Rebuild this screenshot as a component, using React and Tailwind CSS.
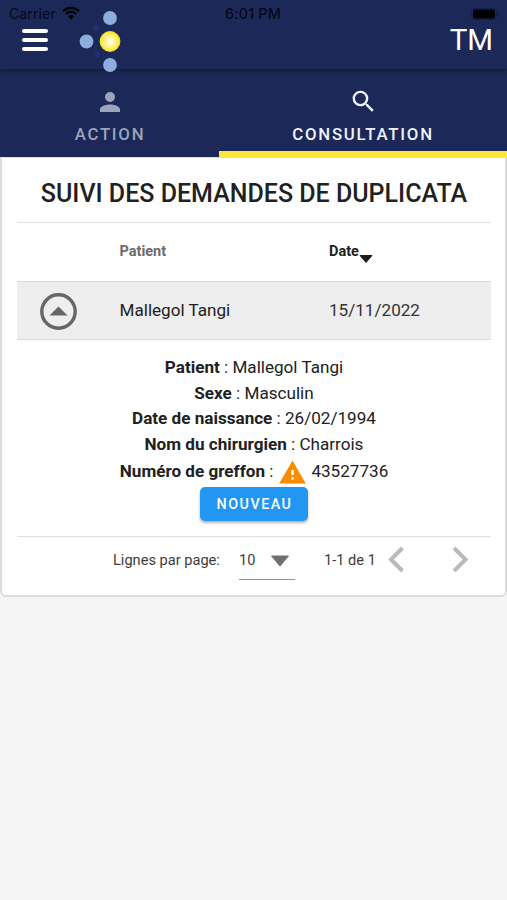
import React, { useState } from 'react';

const PATIENT = {
  name: 'Mallegol Tangi',
  date: '15/11/2022',
  sex: 'Masculin',
  birthDate: '26/02/1994',
  surgeon: 'Charrois',
  graft: '43527736',
};

function Logo() {
  return (
    <svg className="ml-[30px] mt-[9px] h-[66px] w-[46px] shrink-0" viewBox="78 9 46 66">
      <defs>
        <radialGradient id="sun">
          <stop offset="0" stopColor="#fffdf0" />
          <stop offset="0.55" stopColor="#fff28c" />
          <stop offset="0.85" stopColor="#fbea2f" />
          <stop offset="1" stopColor="#e9dc35" />
        </radialGradient>
      </defs>
      <circle cx="110" cy="18" r="6.9" fill="#8cadde" />
      <circle cx="86.5" cy="41.5" r="6.9" fill="#8cadde" />
      <circle cx="110" cy="65" r="6.9" fill="#8cadde" />
      <circle cx="96.3" cy="28" r="3" fill="#262c78" />
      <circle cx="97" cy="55" r="3" fill="#262c78" />
      <circle cx="110" cy="41.5" r="10.4" fill="url(#sun)" />
    </svg>
  );
}

function StatusBar() {
  return (
    <div className="absolute inset-x-0 top-0 z-20 flex h-7 items-center pl-[9px] pr-2 text-[14.2px] text-[#060917]">
      <span className="w-[47px] whitespace-nowrap font-['Inter',sans-serif]">Carrier</span>
      <svg className="ml-[6px] -mt-[2px] h-[14px] w-[18px]" viewBox="0 0 18 14">
        <path d="M1 5.1a11.6 11.6 0 0 1 16 0M3.8 8a7.6 7.6 0 0 1 10.4 0" fill="none" stroke="#000" strokeWidth="2.3" />
        <path d="M9 13.5 5.9 10.3a4.6 4.6 0 0 1 6.2 0z" />
      </svg>
      <span className="ml-[145px] whitespace-nowrap font-['Inter',sans-serif] text-[14.3px] font-medium tracking-[0.2px]">6:01 PM</span>
      <svg className="ml-auto -mt-px h-3 w-[28px]" viewBox="0 0 28 12">
        <rect x="0.5" y="0.5" width="25" height="11" rx="3" fill="none" stroke="#141c45" />
        <rect x="2" y="1.5" width="22" height="9" rx="2" />
        <path d="M26.500 4v4c1-.3 1.500-1 1.500-2s-.5-1.700-1.500-2z" fill="#141c45" />
      </svg>
    </div>
  );
}

function Header() {
  return (
    <header className="relative z-10 flex h-[69px] bg-[#1c2857] shadow-[0_2px_4px_rgba(0,0,0,0.35)]">
      <StatusBar />
      <button className="ml-[22px] mt-[29px] flex h-[22px] w-[26px] flex-col justify-between">
        <span className="h-1 w-full rounded-sm bg-white" />
        <span className="h-1 w-full rounded-sm bg-white" />
        <span className="h-1 w-full rounded-sm bg-white" />
      </button>
      <Logo />
      <span className="ml-auto mr-[14px] mt-[22px] text-[29.500px] leading-[36px] text-white">TM</span>
    </header>
  );
}

function Tabs({ active, onChange }) {
  return (
    <nav className="flex h-[88px] bg-[#1c2857] text-[16.800px] font-medium leading-5">
      <button onClick={() => onChange('action')} className="flex w-[219px] flex-col items-center pt-[18px] text-[#9ba4ba]">
        <svg className="h-[30px] w-[30px]" viewBox="0 0 24 24" fill="currentColor">
          <path d="M12 4a4 4 0 1 1 0 8 4 4 0 0 1 0-8m0 10c4.420 0 8 1.790 8 4v2H4v-2c0-2.210 3.580-4 8-4z" />
        </svg>
        <span className="mt-[7px] pl-px tracking-[1.75px]">ACTION</span>
      </button>
      <button
        onClick={() => onChange('consultation')}
        className={`flex flex-1 flex-col items-center border-b-[6px] pt-[18px] text-[#eef2fc] ${active === 'consultation' ? 'border-[#fce834]' : 'border-transparent'}`}
      >
        <svg className="h-[29px] w-[29px]" viewBox="0 0 24 24" fill="currentColor">
          <path d="M15.5 14h-.79l-.28-.27A6.471 6.471 0 0 0 16 9.500 6.500 6.500 0 1 0 9.500 16c1.610 0 3.090-.59 4.230-1.570l.27.28v.79l5 4.990L20.490 19l-4.990-5zm-6 0C7.010 14 5 11.990 5 9.500S7.010 5 9.500 5 14 7.010 14 9.500 11.990 14 9.500 14z" />
        </svg>
        <span className="mt-[8px] tracking-[1.75px]">CONSULTATION</span>
      </button>
    </nav>
  );
}

function Detail({ label, children }) {
  return (
    <p>
      <b className="font-bold">{label}</b> : {children}
    </p>
  );
}

export default function App() {
  const [tab, setTab] = useState('consultation');
  const [open, setOpen] = useState(true);

  return (
    <div className="h-[900px] w-[507px] overflow-hidden bg-[#f5f5f5] font-['Roboto',sans-serif] text-[#212121]">
      <Header />
      <Tabs active={tab} onChange={setTab} />

      <main className="h-[440px] rounded-b-md border-x-2 border-b-2 border-t border-[#dcdcdc] bg-white pl-[15px] pr-[14px]">
        <h1 className="flex h-[65px] items-center justify-center whitespace-nowrap border-b border-[#e2e2e2] pt-[7px] text-[25px] font-medium">
          SUIVI DES DEMANDES DE DUPLICATA
        </h1>

        {/* Table */}
        <div className="grid h-[58px] grid-cols-[102.500px_209.500px_1fr] items-center text-[14.500px] font-bold">
          <span />
          <span className="text-[#6b6b6b]">Patient</span>
          <span className="flex items-center">
            Date
            <svg className="mt-[14px] h-2 w-[14px]" viewBox="0 0 14 8">
              <path d="M1 .5h12L7 7.500z" fill="#1c1c1c" stroke="#1c1c1c" strokeLinejoin="round" />
            </svg>
          </span>
        </div>
        <div className="grid h-[59px] grid-cols-[102.500px_209.500px_1fr] items-center border-y border-[#dadada] bg-[#eeeeee] text-[17.100px]">
          <button onClick={() => setOpen(!open)} className="pl-[23px] pt-px">
            <svg className="h-[37px] w-[37px]" viewBox="0 0 37 37">
              <circle cx="18.500" cy="18.500" r="16.700" fill="none" stroke="#666" strokeWidth="3.400" />
              <path d="M9.500 22.500h18l-9-9z" fill="#666" />
            </svg>
          </button>
          <span>{PATIENT.name}</span>
          <span className="text-[#333]">{PATIENT.date}</span>
        </div>

        {/* Expanded row */}
        {open && (
          <div className="flex h-[196px] flex-col items-center whitespace-nowrap pt-[15px] text-[17.100px] leading-[25.700px]">
            <Detail label="Patient">{PATIENT.name}</Detail>
            <Detail label="Sexe">{PATIENT.sex}</Detail>
            <Detail label="Date de naissance">{PATIENT.birthDate}</Detail>
            <Detail label="Nom du chirurgien">{PATIENT.surgeon}</Detail>
            <div className="flex h-[29px] items-center">
              <Detail label="Numéro de greffon" />
              <svg className="ml-[5px] mr-1 h-[29px] w-[29px]" viewBox="0 0 24 24" fill="#fb8c00">
                <path d="M1 21h22L12 2 1 21zm12-3h-2v-2h2v2zm0-4h-2v-4h2v4z" />
              </svg>
              <span>{PATIENT.graft}</span>
            </div>
            <button className="h-[34px] w-[108px] rounded-[5px] bg-[#2196f3] pl-px pt-px text-[14.300px] font-medium leading-[33px] tracking-[1.500px] text-white shadow-[0_2px_3px_rgba(0,0,0,0.3)]">
              NOUVEAU
            </button>
          </div>
        )}

        {/* Pagination */}
        <footer className="flex h-[59px] items-start border-t border-[#dfdfdf] pl-[96px] text-[14.600px] leading-5 text-[#3d3d3d]">
          <span className="mt-[13px] w-[126px] whitespace-nowrap">Lignes par page:</span>
          <div className="flex h-[43px] w-[56px] justify-between border-b border-[#929292] pr-[5px] pt-[13px]">
            <span>10</span>
            <svg className="mt-[5px] h-3 w-5" viewBox="0 0 20 12">
              <path d="M1.500 1h17L10 11z" fill="#707070" stroke="#707070" strokeLinejoin="round" />
            </svg>
          </div>
          <span className="ml-[29px] mt-[13px] w-[63px] whitespace-nowrap">1-1 de 1</span>
          <svg className="mt-[8px] h-7 w-[18px]" viewBox="0 0 18 28">
            <path d="M15.500 3 4 14.500 15.500 26" fill="none" stroke="#bababa" strokeWidth="4" />
          </svg>
          <svg className="ml-[46px] mt-[8px] h-7 w-[18px]" viewBox="0 0 18 28">
            <path d="m3 3 11.500 11.500L3 26" fill="none" stroke="#bababa" strokeWidth="4" />
          </svg>
        </footer>
      </main>
    </div>
  );
}
